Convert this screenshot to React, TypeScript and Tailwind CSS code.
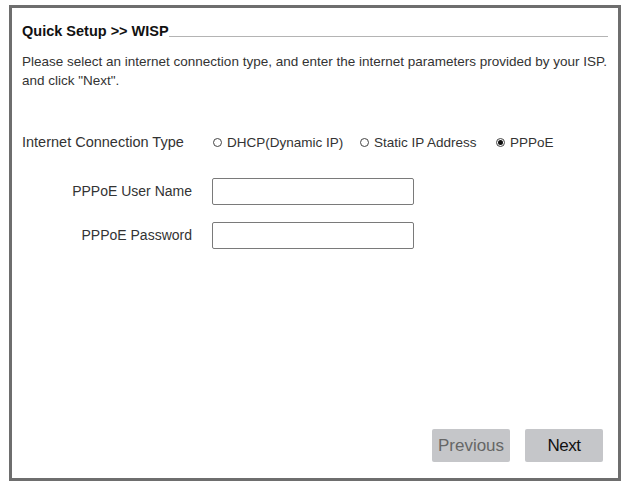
import React from "react";

function Radio({ label, checked }: { label: string; checked?: boolean }) {
  return (
    <label className="flex items-center gap-[5px]">
      <span className="flex h-[9px] w-[9px] items-center justify-center rounded-full border border-[#444]">
        {checked && <span className="h-[5px] w-[5px] rounded-full bg-[#111]" />}
      </span>
      <span>{label}</span>
    </label>
  );
}

function Field({ label }: { label: string }) {
  return (
    <div className="flex items-center">
      <span className="w-[170px] text-right">{label}</span>
      <input
        type="text"
        className="ml-[20px] h-[27px] w-[202px] rounded-[2px] border border-[#7a7a7a] bg-white outline-none"
      />
    </div>
  );
}

export default function App() {
  return (
    <div className="h-[489px] w-[628px] bg-white pl-[9px] pt-[5px] font-['Liberation_Sans',Arial,sans-serif] text-[#333]">
      <div className="flex h-[476px] w-[612px] flex-col border-[3px] border-[#6e6e6e] px-[10px] pt-[15px]">
        <div className="flex items-end">
          <h1 className="text-[14.5px] font-bold leading-[16px] text-[#111]">
            Quick Setup &gt;&gt; WISP
          </h1>
          <div className="mb-[2px] h-px flex-1 bg-[#b4b4b4]" />
        </div>

        <p className="mt-[13px] text-[13.5px] leading-[19px]">
          Please select an internet connection type, and enter the internet parameters provided by your ISP.
          <br />
          and click "Next".
        </p>

        <div className="mt-[42px] flex items-center text-[14.5px]">
          <span className="w-[191px]">Internet Connection Type</span>
          <div className="flex items-center text-[13.5px]">
            <div className="w-[147px]"><Radio label="DHCP(Dynamic IP)" /></div>
            <div className="w-[136px]"><Radio label="Static IP Address" /></div>
            <Radio label="PPPoE" checked />
          </div>
        </div>

        <div className="mt-[24px] flex flex-col gap-[17px] text-[14px]">
          <Field label="PPPoE User Name" />
          <Field label="PPPoE Password" />
        </div>

        <div className="mt-auto mb-[16px] flex justify-end gap-[15px] pr-[5px] text-[17px]">
          <button className="h-[33px] w-[78px] rounded-[2px] bg-[#c5c6c9] text-[#666]">Previous</button>
          <button className="h-[33px] w-[78px] rounded-[2px] bg-[#c5c6c9] tracking-[-0.5px] text-[#111]">Next</button>
        </div>
      </div>
    </div>
  );
}
